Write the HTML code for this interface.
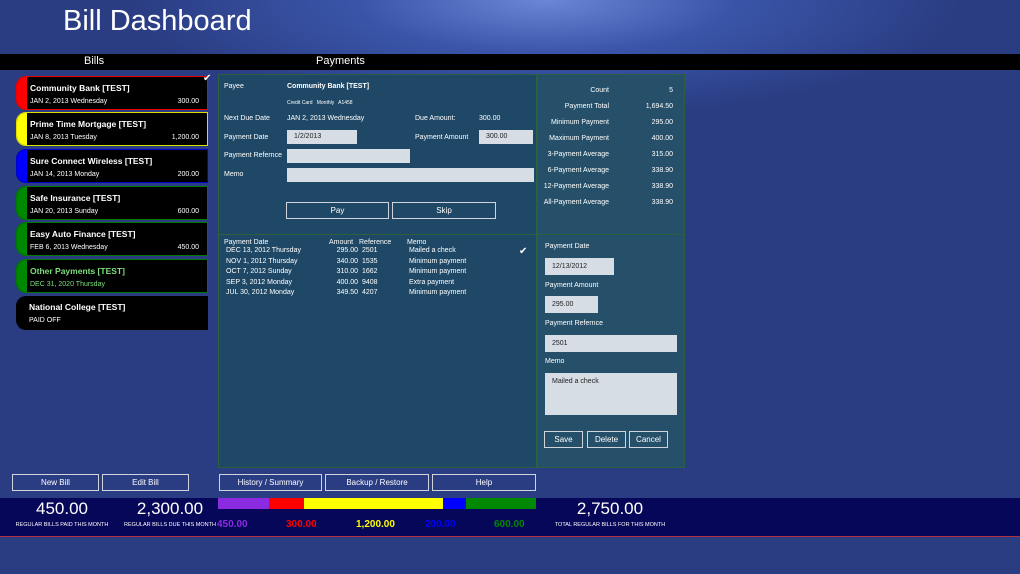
<!DOCTYPE html>
<html><head><meta charset="utf-8"><style>
*{margin:0;padding:0;box-sizing:border-box}
body{width:1020px;height:574px;overflow:hidden;font-family:"Liberation Sans",sans-serif;color:#fff;position:relative;
background:radial-gradient(ellipse 420px 120px at 545px 0,#6b86d6 0%,#3a55a8 45%,rgba(42,60,130,0) 100%),#2a3c82;}
.a{position:absolute}
h1{position:absolute;left:63px;top:5px;font-weight:normal;font-size:29px;color:#fff}
.hbar{left:0;top:54px;width:1020px;height:16px;background:#000;font-size:11px}
.card{position:absolute;left:16px;width:192px;height:34px;background:#000;border-radius:10px 0 0 10px;overflow:hidden}
.card .c{position:absolute;left:0;top:0;bottom:0;width:10px}
.card .t{position:absolute;left:13px;top:6px;font-size:8.5px;font-weight:bold}
.card .d{position:absolute;left:13px;top:21px;font-size:7px}
.card .v{position:absolute;right:8px;top:21px;font-size:7px}
.l{font-size:7px;position:absolute}
.inp{position:absolute;background:#d6dde4;color:#222;font-size:7px;padding:3px 7px}
.btn{position:absolute;border:1.5px solid #d0d4dc;font-size:8px;color:#fff;display:flex;align-items:center;justify-content:center}
.bb{height:17px;top:474px}
.big{position:absolute;font-size:17px;text-align:center}
.sm{position:absolute;font-size:5.5px;text-align:center}
.n{position:absolute;font-size:10px;font-weight:bold;top:519px}
</style></head><body>
<h1>Bill Dashboard</h1>
<div class="a hbar"><span class="a" style="left:84px;top:1px">Bills</span><span class="a" style="left:316px;top:1px">Payments</span></div>

<div class="card" style="top:76px;border:1.5px solid #e00"><div class="c" style="background:#f00"></div><div class="t">Community Bank [TEST]</div><div class="d">JAN 2, 2013 Wednesday</div><div class="v">300.00</div></div>
<span class="a" style="left:203px;top:73px;font-size:10px">✔</span>
<div class="card" style="top:112px;border:1.5px solid #dd0"><div class="c" style="background:#ff0"></div><div class="t">Prime Time Mortgage [TEST]</div><div class="d">JAN 8, 2013 Tuesday</div><div class="v">1,200.00</div></div>
<div class="card" style="top:149px;border:1.5px solid #00c"><div class="c" style="background:#00f"></div><div class="t">Sure Connect Wireless [TEST]</div><div class="d">JAN 14, 2013 Monday</div><div class="v">200.00</div></div>
<div class="card" style="top:186px;border:1.5px solid #070"><div class="c" style="background:#080"></div><div class="t">Safe Insurance [TEST]</div><div class="d">JAN 20, 2013 Sunday</div><div class="v">600.00</div></div>
<div class="card" style="top:222px;border:1.5px solid #070"><div class="c" style="background:#080"></div><div class="t">Easy Auto Finance [TEST]</div><div class="d">FEB 6, 2013 Wednesday</div><div class="v">450.00</div></div>
<div class="card" style="top:259px;border:1.5px solid #070"><div class="c" style="background:#080"></div><div class="t" style="color:#7ddf7d">Other Payments [TEST]</div><div class="d" style="color:#7ddf7d">DEC 31, 2020 Thursday</div></div>
<div class="card" style="top:296px"><div class="t">National College [TEST]</div><div class="d">PAID OFF</div></div>

<div class="a" style="left:218px;top:74px;width:319px;height:394px;background:#1f4866;border:1px solid #2b6040"></div>
<div class="a" style="left:537px;top:74px;width:148px;height:394px;background:#265069;border:1px solid #2b6040"></div>
<div class="a" style="left:218px;top:234px;width:467px;height:1px;background:#2b6040"></div>

<span class="l" style="left:224px;top:83px">Payee</span>
<span class="l" style="left:287px;top:83px;font-weight:bold">Community Bank [TEST]</span>
<span class="l" style="left:287px;top:100px;font-size:5px">Credit Card &nbsp; Monthly &nbsp; A1458</span>
<span class="l" style="left:224px;top:115px">Next Due Date</span>
<span class="l" style="left:287px;top:115px">JAN 2, 2013 Wednesday</span>
<span class="l" style="left:415px;top:115px">Due Amount:</span>
<span class="l" style="left:479px;top:115px">300.00</span>
<span class="l" style="left:224px;top:134px">Payment Date</span>
<div class="inp" style="left:287px;top:130px;width:70px;height:14px">1/2/2013</div>
<span class="l" style="left:415px;top:134px">Payment Amount</span>
<div class="inp" style="left:479px;top:130px;width:54px;height:14px">300.00</div>
<span class="l" style="left:224px;top:152px">Payment Refernce</span>
<div class="inp" style="left:287px;top:149px;width:123px;height:14px"></div>
<span class="l" style="left:224px;top:171px">Memo</span>
<div class="inp" style="left:287px;top:168px;width:247px;height:14px"></div>
<div class="btn" style="left:286px;top:202px;width:103px;height:17px">Pay</div>
<div class="btn" style="left:392px;top:202px;width:104px;height:17px">Skip</div>

<span class="l" style="left:224px;top:239px">Payment Date</span><span class="l" style="left:329px;top:239px">Amount</span><span class="l" style="left:359px;top:239px">Reference</span><span class="l" style="left:407px;top:239px">Memo</span>
<div class="a" style="left:226px;top:246px;font-size:7px;line-height:10.6px">DEC 13, 2012 Thursday<br>NOV 1, 2012 Thursday<br>OCT 7, 2012 Sunday<br>SEP 3, 2012 Monday<br>JUL 30, 2012 Monday</div>
<div class="a" style="left:320px;top:246px;width:38px;text-align:right;font-size:7px;line-height:10.6px">295.00<br>340.00<br>310.00<br>400.00<br>349.50</div>
<div class="a" style="left:362px;top:246px;font-size:7px;line-height:10.6px">2501<br>1535<br>1662<br>9408<br>4207</div>
<div class="a" style="left:409px;top:246px;font-size:7px;line-height:10.6px">Mailed a check<br>Minimum payment<br>Minimum payment<br>Extra payment<br>Minimum payment</div>
<span class="a" style="left:519px;top:246px;font-size:10px">✔</span>

<div class="a" style="left:530px;top:83px;width:79px;text-align:right;font-size:7px;line-height:16px">Count<br>Payment Total<br>Minimum Payment<br>Maximum Payment<br>3-Payment Average<br>6-Payment Average<br>12-Payment Average<br>All-Payment Average</div>
<div class="a" style="left:625px;top:83px;width:48px;text-align:right;font-size:7px;line-height:16px">5<br>1,694.50<br>295.00<br>400.00<br>315.00<br>338.90<br>338.90<br>338.90</div>
<span class="l" style="left:545px;top:243px">Payment Date</span>
<div class="inp" style="left:545px;top:258px;width:69px;height:17px;padding-top:5px">12/13/2012</div>
<span class="l" style="left:545px;top:282px">Payment Amount</span>
<div class="inp" style="left:545px;top:296px;width:53px;height:17px;padding-top:5px">295.00</div>
<span class="l" style="left:545px;top:320px">Payment Refernce</span>
<div class="inp" style="left:545px;top:335px;width:132px;height:17px;padding-top:5px">2501</div>
<span class="l" style="left:545px;top:358px">Memo</span>
<div class="inp" style="left:545px;top:373px;width:132px;height:42px;padding-top:5px">Mailed a check</div>
<div class="btn" style="left:544px;top:431px;width:39px;height:17px">Save</div>
<div class="btn" style="left:587px;top:431px;width:39px;height:17px">Delete</div>
<div class="btn" style="left:629px;top:431px;width:39px;height:17px">Cancel</div>

<div class="btn bb" style="left:12px;width:87px">New Bill</div>
<div class="btn bb" style="left:102px;width:87px">Edit Bill</div>
<div class="btn bb" style="left:219px;width:103px">History / Summary</div>
<div class="btn bb" style="left:325px;width:104px">Backup / Restore</div>
<div class="btn bb" style="left:432px;width:104px">Help</div>

<div class="a" style="left:0;top:498px;width:1020px;height:39px;background:#07075a;border-bottom:1.5px solid #b03040"></div>
<div class="a" style="left:218px;top:498px;width:51px;height:11px;background:#8a2be2"></div>
<div class="a" style="left:269px;top:498px;width:35px;height:11px;background:#f00"></div>
<div class="a" style="left:304px;top:498px;width:139px;height:11px;background:#ff0"></div>
<div class="a" style="left:443px;top:498px;width:23px;height:11px;background:#00f"></div>
<div class="a" style="left:466px;top:498px;width:70px;height:11px;background:#080"></div>
<div class="big" style="left:0;width:124px;top:499px">450.00</div>
<div class="sm" style="left:0;width:124px;top:522px">REGULAR BILLS PAID THIS MONTH</div>
<div class="big" style="left:108px;width:124px;top:499px">2,300.00</div>
<div class="sm" style="left:108px;width:124px;top:522px">REGULAR BILLS DUE THIS MONTH</div>
<div class="big" style="left:540px;width:140px;top:499px">2,750.00</div>
<div class="sm" style="left:540px;width:140px;top:522px">TOTAL REGULAR BILLS FOR THIS MONTH</div>
<span class="n" style="left:217px;color:#8a2be2">450.00</span>
<span class="n" style="left:286px;color:#f00">300.00</span>
<span class="n" style="left:356px;color:#ff0">1,200.00</span>
<span class="n" style="left:425px;color:#00f">200.00</span>
<span class="n" style="left:494px;color:#080">600.00</span>
</body></html>
